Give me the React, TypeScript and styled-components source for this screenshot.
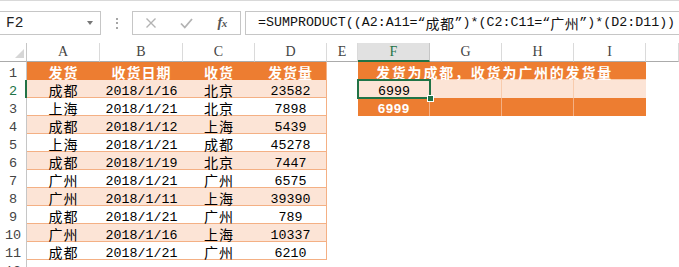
import React from 'react';
import styled, { createGlobalStyle, css } from 'styled-components';

const GlobalStyle = createGlobalStyle`
  html, body { margin: 0; padding: 0; background: #fff; overflow: hidden; }
  body { font-family: "Noto Sans CJK SC", sans-serif; }
  * { box-sizing: border-box; }
`;

const CJK = `"Noto Sans CJK SC", sans-serif`;
const MONO = `"Liberation Mono", "Noto Sans CJK SC", monospace`;
const GREEN = '#217346';
const ORANGE = '#ED7D31';
const BAND = '#FCE4D6';
const LINE = '#F4B084';

const FormulaBar = styled.div`
  height: 43px;
  border-top: 1px solid #d9d9d9;
  padding-top: 10px;
  display: flex;
  align-items: flex-start;
  background: #fff;
`;

const NameBox = styled.div`
  width: 101px;
  height: 24px;
  border: 1px solid #c6c6c6;
  border-left: none;
  display: flex;
  align-items: center;
  justify-content: space-between;
  padding: 0 7px 0 6px;
  font-family: ${MONO};
  font-size: 14.5px;
  color: #222;
`;

const DropArrow = styled.span`
  width: 0;
  height: 0;
  border-left: 3.5px solid transparent;
  border-right: 3.5px solid transparent;
  border-top: 4px solid #777;
`;

const Grip = styled.div`
  width: 31px;
  height: 24px;
  display: flex;
  flex-direction: column;
  align-items: center;
  justify-content: center;
  gap: 2.5px;
  & > span { width: 2px; height: 2px; background: #a6a6a6; }
`;

const ButtonBox = styled.div`
  width: 109px;
  height: 24px;
  border: 1px solid #c6c6c6;
  display: grid;
  grid-template-columns: repeat(3, 1fr);
  align-items: center;
  justify-items: center;
`;

const FxText = styled.span`
  font-family: "Liberation Serif", serif;
  font-style: italic;
  font-weight: bold;
  font-size: 14px;
  color: #555;
  letter-spacing: -0.5px;
  & > small { font-size: 11px; }
`;

const FormulaBox = styled.div`
  flex: 1;
  margin-left: 4px;
  height: 24px;
  border: 1px solid #c6c6c6;
  border-right: none;
  display: flex;
  align-items: center;
  padding-left: 12px;
  white-space: nowrap;
  overflow: hidden;
  color: #111;
  line-height: 18px;
`;

const Asc = styled.span`
  font-family: ${MONO};
  font-size: 13.3px;
`;

const Han = styled.span`
  font-family: ${CJK};
  font-size: 14px;
  letter-spacing: 0.5px;
`;

const Sheet = styled.div`
  display: grid;
  grid-template-columns: 27px 73px 83px 72px 72px 31px 72px 72px 72px 72px 1fr;
  grid-template-rows: 19px repeat(12, 18px);
`;

const Corner = styled.div`
  border-right: 1px solid #c6c6c6;
  border-bottom: 1px solid #ababab;
  display: flex;
  align-items: flex-end;
  justify-content: flex-end;
  padding: 0 2px 3px 0;
`;

const ColHead = styled.div<{ $active?: boolean }>`
  border-right: 1px solid #dadada;
  border-bottom: 1px solid #ababab;
  display: flex;
  align-items: center;
  justify-content: center;
  font-family: "Liberation Serif", serif;
  font-size: 14px;
  line-height: 16px;
  color: #444;
  ${(p) =>
    p.$active &&
    css`
      background: #e1e1e1;
      color: ${GREEN};
      border-bottom: 2px solid ${GREEN};
      border-right-color: #c6c6c6;
    `}
`;

const RowHead = styled.div<{ $active?: boolean }>`
  border-right: 1px solid #c6c6c6;
  display: flex;
  align-items: flex-start;
  justify-content: center;
  padding-top: 5px;
  font-family: ${MONO};
  font-size: 13.5px;
  line-height: 14px;
  color: #444;
  overflow: hidden;
  ${(p) =>
    p.$active &&
    css`
      color: ${GREEN};
      border-right: 2px solid ${GREEN};
      padding-left: 1px;
    `}
`;

type Fill = 'head' | 'band' | 'plain' | 'total' | 'none';

const fills: Record<Fill, string> = {
  head: ORANGE,
  band: BAND,
  plain: '#fff',
  total: ORANGE,
  none: '#fff',
};

const Cell = styled.div<{
  $fill: Fill;
  $num?: boolean;
  $bold?: boolean;
  $bottom?: string;
  $right?: string;
  $selected?: boolean;
}>`
  position: relative;
  background: ${(p) => fills[p.$fill]};
  display: flex;
  align-items: flex-start;
  justify-content: center;
  padding-top: ${(p) => (p.$num ? '5px' : '3px')};
  white-space: nowrap;
  line-height: 14px;
  font-family: ${(p) => (p.$num ? MONO : CJK)};
  font-size: ${(p) => (p.$num ? '13.3px' : '14px')};
  letter-spacing: ${(p) => (p.$num ? '0' : '1px')};
  font-weight: ${(p) => (p.$bold ? 700 : 400)};
  color: ${(p) => (p.$fill === 'head' || p.$fill === 'total' ? '#fff' : '#000')};
  border-bottom: ${(p) => (p.$bottom ? `1px solid ${p.$bottom}` : 'none')};
  border-right: ${(p) => (p.$right ? `1px solid ${p.$right}` : 'none')};
  ${(p) =>
    p.$selected &&
    css`
      z-index: 2;
      &::after {
        content: '';
        position: absolute;
        left: -1px;
        top: -1px;
        right: -1px;
        bottom: -1px;
        border: 2px solid ${GREEN};
      }
      &::before {
        content: '';
        position: absolute;
        right: -4px;
        bottom: -4px;
        width: 5px;
        height: 5px;
        background: ${GREEN};
        border: 1px solid #fff;
        z-index: 3;
      }
    `}
`;

const TitleCell = styled(Cell)`
  grid-column: span 4;
  letter-spacing: 1.8px;
  padding-right: 15px;
`;

const rows: [string, string, string, string][] = [
  ['成都', '2018/1/16', '北京', '23582'],
  ['上海', '2018/1/21', '北京', '7898'],
  ['成都', '2018/1/12', '上海', '5439'],
  ['上海', '2018/1/21', '成都', '45278'],
  ['成都', '2018/1/19', '北京', '7447'],
  ['广州', '2018/1/21', '广州', '6575'],
  ['广州', '2018/1/11', '上海', '39390'],
  ['成都', '2018/1/21', '广州', '789'],
  ['广州', '2018/1/16', '上海', '10337'],
  ['成都', '2018/1/21', '广州', '6210'],
];

const cols = ['A', 'B', 'C', 'D', 'E', 'F', 'G', 'H', 'I', ''];

function CloseIcon() {
  return (
    <svg width="12" height="12" viewBox="0 0 12 12">
      <path d="M1.5 1.5 L10.5 10.5 M10.5 1.5 L1.5 10.5" stroke="#b3b3b3" strokeWidth="1.4" fill="none" />
    </svg>
  );
}

function CheckIcon() {
  return (
    <svg width="13" height="11" viewBox="0 0 13 11">
      <path d="M1 5.5 L4.8 9.5 L12 1" stroke="#b3b3b3" strokeWidth="1.8" fill="none" />
    </svg>
  );
}

function SelectAll() {
  return (
    <svg width="9" height="9" viewBox="0 0 9 9">
      <polygon points="9,0 9,9 0,9" fill="#d6d6d6" />
    </svg>
  );
}

export default function App() {
  return (
    <>
      <GlobalStyle />
      <FormulaBar>
        <NameBox>
          F2
          <DropArrow />
        </NameBox>
        <Grip>
          <span />
          <span />
          <span />
        </Grip>
        <ButtonBox>
          <CloseIcon />
          <CheckIcon />
          <FxText>
            f<small>x</small>
          </FxText>
        </ButtonBox>
        <FormulaBox>
          <Asc>=SUMPRODUCT((A2:A11=“</Asc>
          <Han>成都</Han>
          <Asc>”)*(C2:C11=“</Asc>
          <Han>广州</Han>
          <Asc>”)*(D2:D11))</Asc>
        </FormulaBox>
      </FormulaBar>
      <Sheet>
        <Corner>
          <SelectAll />
        </Corner>
        {cols.map((c, i) => (
          <ColHead key={i} $active={c === 'F'}>
            {c}
          </ColHead>
        ))}

        {/* Row 1 */}
        <RowHead>1</RowHead>
        <Cell $fill="head" $bold>发货</Cell>
        <Cell $fill="head" $bold>收货日期</Cell>
        <Cell $fill="head" $bold>收货</Cell>
        <Cell $fill="head" $bold $right={LINE}>发货量</Cell>
        <Cell $fill="none" />
        <TitleCell $fill="head" $bold $bottom="#F8CBAD">
          发货为成都，收货为广州的发货量
        </TitleCell>
        <Cell $fill="none" />

        {rows.map((r, i) => {
          const n = i + 2;
          const fill: Fill = i % 2 === 0 ? 'band' : 'plain';
          return (
            <React.Fragment key={n}>
              <RowHead $active={n === 2}>{n}</RowHead>
              <Cell $fill={fill} $bottom={LINE}>{r[0]}</Cell>
              <Cell $fill={fill} $bottom={LINE} $num>{r[1]}</Cell>
              <Cell $fill={fill} $bottom={LINE}>{r[2]}</Cell>
              <Cell $fill={fill} $bottom={LINE} $right={LINE} $num>{r[3]}</Cell>
              <Cell $fill="none" />
              {n === 2 && (
                <>
                  <Cell $fill="band" $num $selected>6999</Cell>
                  <Cell $fill="band" $right="#F8CBAD" />
                  <Cell $fill="band" $right="#F8CBAD" />
                  <Cell $fill="band" />
                </>
              )}
              {n === 3 && (
                <>
                  <Cell $fill="total" $num $bold $right={LINE}>6999</Cell>
                  <Cell $fill="total" $right={LINE} />
                  <Cell $fill="total" $right={LINE} />
                  <Cell $fill="total" />
                </>
              )}
              {n > 3 && (
                <>
                  <Cell $fill="none" />
                  <Cell $fill="none" />
                  <Cell $fill="none" />
                  <Cell $fill="none" />
                </>
              )}
              <Cell $fill="none" />
            </React.Fragment>
          );
        })}

        <RowHead>12</RowHead>
      </Sheet>
    </>
  );
}
